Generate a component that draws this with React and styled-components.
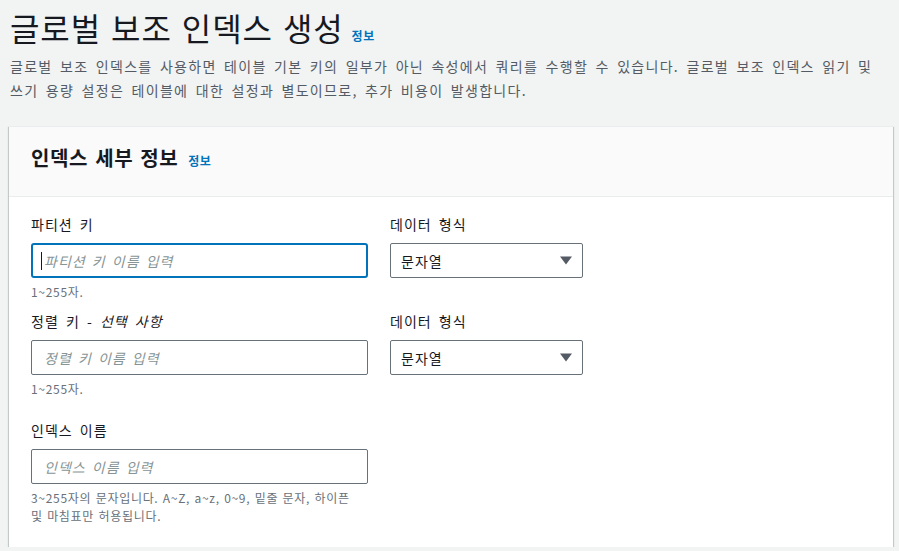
import React from 'react';
import styled, { createGlobalStyle, css } from 'styled-components';

const GlobalStyle = createGlobalStyle`
  html, body {
    margin: 0;
    padding: 0;
    background: #f2f3f3;
    font-family: "Noto Sans CJK KR", "Noto Sans", sans-serif;
    color: #16191f;
    letter-spacing: 1px;
    word-spacing: 3px;
  }
`;

const Page = styled.div`
  padding: 6px 6px 0 10px;
`;

const Heading = styled.h1`
  margin: 0;
  display: flex;
  align-items: baseline;
  gap: 8px;
  font-size: 32px;
  font-weight: 400;
  line-height: 42px;
  letter-spacing: 0.9px;
  word-spacing: 2px;
  color: #16191f;
`;

const InfoLink = styled.a`
  font-size: 12px;
  font-weight: 700;
  line-height: 1;
  letter-spacing: 0.5px;
  color: #0073bb;
  text-decoration: none;
`;

const Description = styled.p`
  margin: 6px 0 0;
  font-size: 14px;
  line-height: 24px;
  letter-spacing: 1.3px;
  word-spacing: 3px;
  color: #545b64;
`;

const Card = styled.section`
  margin: 24px 0 0 -1px;
  width: 884px;
  background: #fff;
  border-top: 1px solid #eaeded;
  box-shadow: 0 1px 1px 0 rgba(0, 28, 36, 0.3), 1px 1px 1px 0 rgba(0, 28, 36, 0.15), -1px 1px 1px 0 rgba(0, 28, 36, 0.15);
`;

const CardHeader = styled.header`
  display: flex;
  align-items: baseline;
  gap: 10px;
  padding: 17px 22px 24px;
  background: #fafafa;
  border-bottom: 1px solid #eaeded;
`;

const CardTitle = styled.h2`
  margin: 0;
  font-size: 20px;
  font-weight: 700;
  line-height: 28px;
  letter-spacing: 0.6px;
  word-spacing: 2px;
`;

const CardBody = styled.div`
  display: flex;
  flex-direction: column;
  gap: 10px;
  padding: 17px 22px 22px;
`;

const FieldRow = styled.div`
  display: flex;
  gap: 22px;
  ${(props) => props.spaced && css`
    margin-top: 12px;
  `}
`;

const Field = styled.div`
  display: flex;
  flex-direction: column;
  width: ${(props) => props.width}px;
`;

const Label = styled.label`
  font-size: 14px;
  line-height: 20px;
  margin-bottom: 9px;
  color: #16191f;

  em {
    font-style: italic;
  }
`;

const InputWrap = styled.div`
  position: relative;
`;

const Input = styled.input`
  box-sizing: border-box;
  display: block;
  height: 35px;
  width: 100%;
  padding: 0 12px;
  border: 1px solid #687078;
  border-radius: 2px;
  font-family: inherit;
  font-size: 14px;
  letter-spacing: 1px;
  word-spacing: 2px;
  color: #16191f;
  background: #fff;
  outline: none;

  &::placeholder {
    color: #879596;
    font-style: italic;
  }

  ${(props) => props.focused && css`
    border: 2px solid #0073bb;
    border-radius: 3px;
    padding: 0 11px;
  `}
`;

const TextCaret = styled.span`
  position: absolute;
  left: 10px;
  top: 9px;
  width: 1px;
  height: 18px;
  background: #16191f;
`;

const Select = styled.div`
  box-sizing: border-box;
  height: 35px;
  display: flex;
  align-items: center;
  justify-content: space-between;
  padding: 0 10px 0 10px;
  border: 1px solid #687078;
  border-radius: 2px;
  font-size: 14px;
  color: #16191f;
  background: #fff;
`;

const Hint = styled.div`
  margin-top: 5px;
  font-size: 12px;
  line-height: 18px;
  letter-spacing: 0.7px;
  word-spacing: 1px;
  white-space: nowrap;
  color: #687078;
`;

const Caret = () => (
  <svg width="12" height="9" viewBox="0 0 12 9">
    <path d="M0 0.5 H12 L6 8.5 Z" fill="#545b64" />
  </svg>
);

function KeyRow({ label, placeholder, focused }) {
  return (
    <FieldRow>
      <Field width={337}>
        <Label>{label}</Label>
        <InputWrap>
          <Input placeholder={placeholder} focused={focused} readOnly />
          {focused && <TextCaret />}
        </InputWrap>
        <Hint>1~255자.</Hint>
      </Field>
      <Field width={193}>
        <Label>데이터 형식</Label>
        <Select>
          문자열
          <Caret />
        </Select>
      </Field>
    </FieldRow>
  );
}

export default function App() {
  return (
    <>
      <GlobalStyle />
      <Page>
        <Heading>
          글로벌 보조 인덱스 생성
          <InfoLink href="#">정보</InfoLink>
        </Heading>
        <Description>
          글로벌 보조 인덱스를 사용하면 테이블 기본 키의 일부가 아닌 속성에서 쿼리를 수행할 수 있습니다. 글로벌 보조 인덱스 읽기 및
          <br />
          쓰기 용량 설정은 테이블에 대한 설정과 별도이므로, 추가 비용이 발생합니다.
        </Description>
        <Card>
          <CardHeader>
            <CardTitle>인덱스 세부 정보</CardTitle>
            <InfoLink href="#">정보</InfoLink>
          </CardHeader>
          <CardBody>
            <KeyRow label="파티션 키" placeholder="파티션 키 이름 입력" focused />
            <KeyRow
              label={<>정렬 키 - <em>선택 사항</em></>}
              placeholder="정렬 키 이름 입력"
            />
            <FieldRow spaced>
              <Field width={337}>
                <Label>인덱스 이름</Label>
                <Input placeholder="인덱스 이름 입력" readOnly />
                <Hint>
                  3~255자의 문자입니다. A~Z, a~z, 0~9, 밑줄 문자, 하이픈
                  <br />
                  및 마침표만 허용됩니다.
                </Hint>
              </Field>
            </FieldRow>
          </CardBody>
        </Card>
      </Page>
    </>
  );
}
